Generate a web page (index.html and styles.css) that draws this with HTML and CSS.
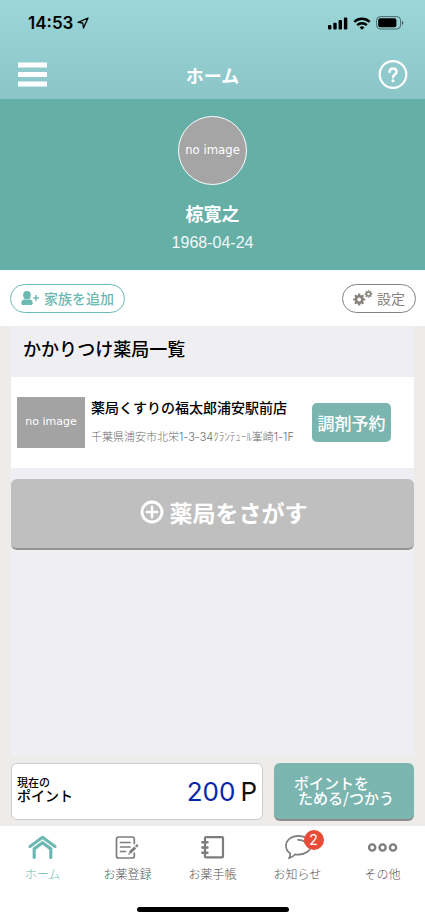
FILE: index.html
```html
<!DOCTYPE html>
<html lang="ja">
<head>
<meta charset="utf-8">
<meta name="viewport" content="width=device-width, initial-scale=1">
<title>ホーム</title>
<link rel="stylesheet" href="styles.css">
</head>
<body>
<header class="top">
  <div class="status">
    <div class="status-time">
      <span>14:53</span>
      <svg width="12" height="12" viewBox="0 0 12 12" fill="none" stroke="#000" stroke-width="1.3" stroke-linejoin="round"><path d="M11 1 1 5.300l4.800.7.7 5z"/></svg>
    </div>
    <div class="status-icons">
      <svg width="20" height="13" viewBox="0 0 20 13"><rect x="0" y="8" width="3.4" height="4.4" rx="1"/><rect x="5.3" y="5.8" width="3.4" height="6.6" rx="1"/><rect x="10.6" y="3" width="3.4" height="9.4" rx="1"/><rect x="15.9" y="0.4" width="3.4" height="12" rx="1"/></svg>
      <svg width="18" height="13" viewBox="0 0 18 13" fill="none" stroke="#000" stroke-width="2.4"><path d="M1.300 4.900a11 11 0 0 1 15.400 0M4.200 8.200a6.900 6.900 0 0 1 9.600 0"/><path d="m9 12.800-2.400-2.400a3.400 3.400 0 0 1 4.800 0z" fill="#000" stroke="none"/></svg>
      <svg width="28" height="14" viewBox="0 0 28 14"><rect x="0.6" y="0.6" width="24" height="12.4" rx="3.8" fill="none" stroke="#000" stroke-opacity=".5"/><rect x="2.2" y="2.3" width="18.2" height="9" rx="2"/><path d="M26 4.700c1.800.8 1.800 3.400 0 4.200z" fill-opacity=".6"/></svg>
    </div>
  </div>
  <div class="nav">
    <button class="icon-button" type="button" aria-label="メニュー">
      <svg width="29" height="26" viewBox="0 0 29 26" fill="#fff"><path d="M0 .5h29v5H0zM0 10h29v5H0zM0 19.500h29v5H0z"/></svg>
    </button>
    <h1 class="nav-title">ホーム</h1>
    <button class="icon-button" type="button" aria-label="ヘルプ">
      <svg width="30" height="30" viewBox="0 0 30 30" fill="none" stroke="#fff"><circle cx="15" cy="14.500" r="13.300" stroke-width="2.200"/><path d="M11.600 11.800c0-4.500 7-4.500 7 0 0 2.800-3.600 2.700-3.600 5.400" stroke-width="2.400" stroke-linecap="round"/><circle cx="15" cy="20.700" r="1.500" fill="#fff" stroke="none"/></svg>
    </button>
  </div>
</header>

<section class="profile">
  <div class="avatar">no image</div>
  <h2 class="profile-name">椋寛之</h2>
  <p class="profile-birth">1968-04-24</p>
</section>

<div class="actions">
  <button class="pill pill-family" type="button">
    <svg width="19" height="15" viewBox="0 0 19 15" fill="#6cb9b3"><ellipse cx="6" cy="4.200" rx="3.800" ry="4.200"/><path d="M.3 12.200c0-2.400 1.200-3.600 3.300-3.900 1.500 1 3.300 1 4.800 0 2.100.3 3.300 1.500 3.300 3.900 0 1.200-.7 1.800-2 1.800H2.300c-1.300 0-2-.6-2-1.800z"/><path d="M12.300 6.300h2v-2.200h1.400v2.200h2.300v1.400h-2.300v2.200h-1.400V7.700h-2z"/></svg>
    <span>家族を追加</span>
  </button>
  <button class="pill pill-settings" type="button">
    <svg width="20" height="16" viewBox="0 0 20 16" fill="none" stroke="#85827b"><circle cx="6.200" cy="9.500" r="3.200" stroke-width="2.600"/><path d="M6.200 3.500v2M6.200 13.500v2M.2 9.500h2M10.200 9.500h2M2 5.300l1.400 1.400M9 12.300l1.400 1.400M10.400 5.300 9 6.700M3.400 12.300 2 13.700" stroke-width="2.200"/><circle cx="15.500" cy="4" r="2" stroke-width="1.600"/><path d="M15.500.2v1.300M15.500 6.500v1.300M11.700 4H13M18 4h1.300M12.800 1.300l.9.900M17.300 5.800l.9.900M18.200 1.300l-.9.900M13.700 5.800l-.9.900" stroke-width="1.400"/></svg>
    <span>設定</span>
  </button>
</div>

<main class="content">
  <div class="list">
    <h2 class="list-title">かかりつけ薬局一覧</h2>
    <article class="pharmacy">
      <div class="thumb">no image</div>
      <div class="pharmacy-text">
        <h3 class="pharmacy-name">薬局くすりの福太郎浦安駅前店</h3>
        <p class="pharmacy-address">千葉県浦安市北栄1-3-34ｸﾗﾝﾃｭｰﾙ峯崎1-1F</p>
      </div>
      <button class="reserve" type="button">調剤予約</button>
    </article>
    <button class="search" type="button">
      <svg width="24" height="24" viewBox="0 0 24 24" fill="none" stroke="#fff"><circle cx="12" cy="12" r="10" stroke-width="2.800"/><path d="M12 6.800v10.400M6.800 12h10.400" stroke-width="2.400" stroke-linecap="round"/></svg>
      <span>薬局をさがす</span>
    </button>
  </div>
  <div class="points">
    <div class="balance">
      <p class="balance-label"><span class="balance-small">現在の</span><span class="balance-large">ポイント</span></p>
      <p class="balance-value"><span class="balance-number">200</span><span>P</span></p>
    </div>
    <button class="use-points" type="button"><span class="use-lines">ポイントを<span class="use-second">ためる/つかう</span></span></button>
  </div>
</main>

<footer class="bottom">
  <nav class="tabs">
    <a class="tab tab-active" href="#home">
      <svg width="30" height="26" viewBox="0 0 30 26" fill="none" stroke="#6cb9b3" stroke-linecap="round" stroke-linejoin="round"><path d="M2 12.500 14.500 3.300 27 12.500" stroke-width="3"/><path d="M6.200 23.500v-8.600l8.300-6.100 8.300 6.100v8.600" stroke-width="3.200" stroke-linejoin="miter"/></svg>
      <span>ホーム</span>
    </a>
    <a class="tab" href="#register">
      <svg width="26" height="26" viewBox="0 0 26 26" fill="none" stroke="#7d7d7d" stroke-width="1.700" stroke-linecap="round"><path d="M19.300 9.500V5a2 2 0 0 0-2-2H3.500a2 2 0 0 0-2 2v17a2 2 0 0 0 2 2h13.800a2 2 0 0 0 2-2v-3"/><path d="M5.500 8.500H15M5.500 13H15M5.500 17.500h5"/><path d="m14.800 18.800 5.400-5.400" stroke-width="2.800" stroke-linecap="butt"/><path d="m21.500 12.100.6-.6" stroke-width="2.400"/><path d="m13.900 20 .4-.5" stroke-width="1.300"/></svg>
      <span>お薬登録</span>
    </a>
    <a class="tab" href="#notebook">
      <svg width="26" height="26" viewBox="0 0 26 26" fill="none" stroke="#7d7d7d"><rect x="5" y="3.200" width="18" height="20.200" rx="1" stroke-width="2.200"/><path d="M2.300 8.200h5.200M2.300 13.500h5.200M2.300 18.800h5.200" stroke-width="2.400" stroke-linecap="round"/></svg>
      <span>お薬手帳</span>
    </a>
    <a class="tab" href="#news">
      <span class="tab-icon">
        <svg width="28" height="26" viewBox="0 0 28 26" fill="none" stroke="#7d7d7d" stroke-width="1.700" stroke-linecap="round" stroke-linejoin="round"><path d="M14.500 1.800C7.500 1.800 2 6.200 2 11.800c0 3.500 1.500 6 4.300 7.600.1 2-.2 3.200-1.300 4.900 2.800-.7 4.600-1.900 5.900-3.900 1.200.2 2.200.2 3.300.2 7 0 12.500-3.800 12.500-9.200s-5.200-9.600-12.200-9.600z"/><path d="M14 5.800c4 0 6.700 1.400 8 3.700"/></svg>
        <span class="badge">2</span>
      </span>
      <span>お知らせ</span>
    </a>
    <a class="tab" href="#other">
      <svg width="30" height="26" viewBox="0 0 30 26" fill="none" stroke="#7d7d7d" stroke-width="2.400"><circle cx="4.200" cy="13.500" r="3.100"/><circle cx="14.600" cy="13.500" r="3.100"/><circle cx="25" cy="13.500" r="3.100"/></svg>
      <span>その他</span>
    </a>
  </nav>
  <div class="home-indicator"></div>
</footer>
</body>
</html>
```

FILE: styles.css
```css
* { box-sizing: border-box; }

body {
  margin: 0;
  min-height: 100vh;
  display: flex;
  flex-direction: column;
  background: #edecea;
  color: #000;
  font-family: "Noto Sans CJK JP", sans-serif;
}

h1, h2, h3, p { margin: 0; }

button {
  font-family: inherit;
  border: 0;
  padding: 0;
  cursor: pointer;
}

svg { display: block; flex: none; }

/* Header */
.top { background: linear-gradient(#9bd6d8, #8bc5c8); }

.status {
  height: 50px;
  padding: 0 21px 4px 28px;
  display: flex;
  align-items: center;
  justify-content: space-between;
}

.status-time {
  display: flex;
  align-items: center;
  gap: 4px;
  font: 600 17px/20px Inter, sans-serif;
}

.status-icons { display: flex; align-items: center; gap: 5px; }

.nav {
  height: 49px;
  padding: 0 17px 0 18px;
  display: flex;
  align-items: center;
  justify-content: space-between;
}

.icon-button { background: none; }

.nav-title {
  color: #fff;
  font-size: 18px;
  line-height: 24px;
  font-weight: 700;
}

/* Profile */
.profile {
  height: 171px;
  padding-top: 17px;
  display: flex;
  flex-direction: column;
  align-items: center;
  background: #65afa7;
  color: #fff;
}

.avatar {
  width: 69px;
  height: 69px;
  border: 1px solid #fff;
  border-radius: 50%;
  background: #a5a5a5;
  text-align: center;
  font: 13px/66px "DejaVu Sans Condensed", "DejaVu Sans", sans-serif;
}

.profile-name {
  margin-top: 16px;
  font-size: 18px;
  line-height: 24px;
  font-weight: 700;
}

.profile-birth {
  margin-top: 8px;
  color: #f0f8f7;
  font: 16px/20px "Liberation Sans", sans-serif;
}

/* Actions */
.actions {
  height: 56px;
  padding: 0 9px 0 10px;
  display: flex;
  align-items: center;
  justify-content: space-between;
  background: #fff;
}

.pill {
  height: 29px;
  padding: 0 10px;
  display: flex;
  align-items: center;
  gap: 4px;
  border: 1px solid currentColor;
  border-radius: 15px;
  background: #fff;
  font-size: 14px;
  line-height: 20px;
}

.pill-family { color: #6cb9b3; font-weight: 500; }
.pill-settings { color: #85827b; }

/* Pharmacy list */
.content {
  flex: 1;
  padding: 0 11px;
  display: flex;
  flex-direction: column;
}

.list { flex: 1; background: #eeeef3; }

.list-title {
  padding: 8px 12px 15px;
  font-size: 18px;
  line-height: 28px;
  font-weight: 500;
}

.pharmacy {
  height: 91px;
  padding: 0 23px 0 6px;
  display: flex;
  align-items: center;
  background: #fff;
}

.thumb {
  flex: none;
  width: 68px;
  height: 51px;
  margin-right: 6px;
  background: #a3a3a3;
  color: #fff;
  text-align: center;
  font: 11px/50px "DejaVu Sans", sans-serif;
}

.pharmacy-text {
  flex: 1;
  min-width: 0;
  padding-bottom: 4px;
  white-space: nowrap;
}

.pharmacy-name {
  font-size: 14px;
  line-height: 20px;
  font-weight: 500;
}

.pharmacy-address {
  margin-top: 12px;
  color: #6e6e6e;
  font: 300 11px/16px Inter, "Noto Sans CJK JP", sans-serif;
}

.reserve {
  flex: none;
  width: 79px;
  height: 39px;
  border-radius: 5px;
  background: #7bb5af;
  color: #fff;
  font-size: 17px;
  font-weight: 500;
}

.search {
  width: 100%;
  height: 71px;
  margin-top: 11px;
  padding: 0 0 3px 22px;
  display: flex;
  align-items: center;
  justify-content: center;
  gap: 6px;
  border-bottom: 2px solid #949494;
  border-radius: 6px;
  background: #bfbfbf;
  color: #fff;
  font-size: 23px;
  font-weight: 700;
}

/* Points */
.points {
  padding: 7px 0 5px;
  display: flex;
  gap: 11px;
}

.balance {
  flex: 1;
  height: 57px;
  padding: 0 5px;
  display: flex;
  align-items: center;
  justify-content: space-between;
  border: 1px solid #ccc;
  border-radius: 6px;
  background: #fff;
}

.balance-label { padding-bottom: 4px; font-weight: 500; }
.balance-label span { display: block; }
.balance-small { font-size: 11px; line-height: 12px; }
.balance-large { font-size: 14px; line-height: 15px; }

.balance-value {
  display: flex;
  gap: 5px;
  color: #111;
  font: 26px/32px Inter, sans-serif;
}

.balance-number { color: #0827a8; }

.use-points {
  width: 140px;
  height: 58px;
  padding-bottom: 2px;
  border-bottom: 2px solid #8c8c8c;
  border-radius: 6px;
  background: #7bb5af;
  color: #fff;
  font-size: 15px;
  line-height: 15px;
  font-weight: 500;
}

.use-lines { display: inline-block; text-align: left; }
.use-second { display: block; padding-left: 4px; }

/* Tab bar */
.bottom { background: #fff; }

.tabs { height: 80px; display: flex; }

.tab {
  flex: 1;
  padding-top: 8px;
  display: flex;
  flex-direction: column;
  align-items: center;
  gap: 4px;
  color: #555;
  font-size: 12px;
  line-height: 20px;
  font-weight: 300;
  text-decoration: none;
}

.tab-active { color: #6cb9b3; }

.tab-icon { position: relative; }

.badge {
  position: absolute;
  top: -4px;
  left: 20px;
  width: 20px;
  height: 20px;
  border-radius: 50%;
  background: #ea4b38;
  color: #fff;
  text-align: center;
  font: 14px/20px Inter, sans-serif;
}

.home-indicator {
  width: 152px;
  height: 5px;
  margin: 1px auto 8px;
  border-radius: 3px;
  background: #000;
}
```
